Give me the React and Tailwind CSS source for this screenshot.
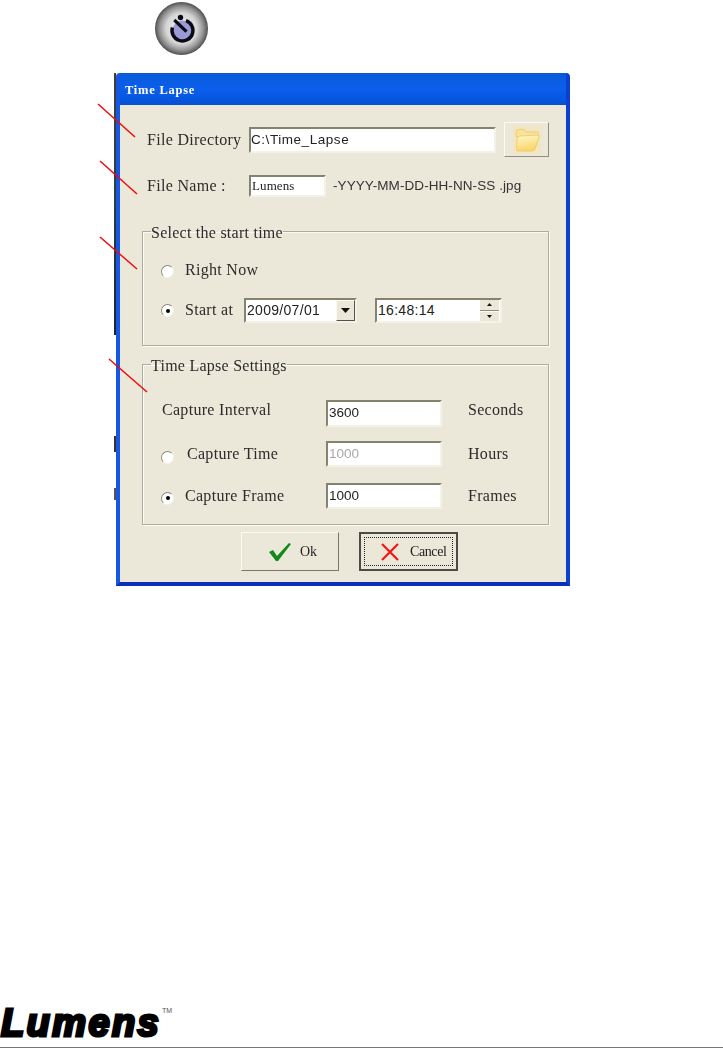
const serif = "font-['Liberation_Serif',serif]";
const sans = "font-['Liberation_Sans',sans-serif]";

function Sunken({ className = "", children }) {
  return (
    <div className={`bg-white border-2 border-t-[#85836f] border-l-[#85836f] border-b-[#f4f2e6] border-r-[#f4f2e6] flex items-center ${className}`}>
      {children}
    </div>
  );
}

function Radio({ checked, className = "" }) {
  return (
    <span className={`w-[13px] h-[13px] rounded-full bg-white border border-t-[#8e8c7e] border-l-[#8e8c7e] border-r-[#f4f2e8] border-b-[#f4f2e8] flex items-center justify-center shrink-0 ${className}`}>
      {checked && <span className="w-[4px] h-[4px] rounded-full bg-black" />}
    </span>
  );
}

function Group({ title, className = "", children }) {
  return (
    <fieldset className={`border border-[#aeac9e] shadow-[1px_1px_0_#fbfaf3,inset_1px_1px_0_#fbfaf3] ${className}`}>
      <legend className={`ml-[8px] px-0 text-[16px] leading-[17px] tracking-[0.25px] translate-y-[1px] text-[#2c2c2c] ${serif}`}>{title}</legend>
      {children}
    </fieldset>
  );
}

function Label({ className = "", children }) {
  return <span className={`text-[16px] leading-[18px] tracking-[0.3px] text-[#2c2c2c] whitespace-nowrap ${serif} ${className}`}>{children}</span>;
}

function TimerBadge() {
  return (
    <svg width="54" height="54" viewBox="0 0 54 54" className="block">
      <defs>
        <radialGradient id="tb" cx="50%" cy="50%" r="50%">
          <stop offset="0%" stopColor="#f2f2f2" />
          <stop offset="58%" stopColor="#d6d6d6" />
          <stop offset="82%" stopColor="#949494" />
          <stop offset="100%" stopColor="#505050" />
        </radialGradient>
      </defs>
      <circle cx="27.5" cy="26.5" r="26.5" fill="url(#tb)" />
      <circle cx="28.5" cy="28.5" r="10" fill="#9a9bd6" />
      <path d="M32 18.6 A10.5 10.5 0 1 1 18.4 25.5" fill="none" stroke="#0a0a14" strokeWidth="3.4" />
      <path d="M20.3 18 L32.5 29.7" stroke="#0a0a14" strokeWidth="3.2" />
      <circle cx="26.5" cy="15.5" r="2.7" fill="#0a0a14" />
    </svg>
  );
}

function FolderIcon() {
  return (
    <svg width="28" height="28" viewBox="0 0 28 28">
      <defs>
        <linearGradient id="fo" x1="0" y1="0" x2="0.3" y2="1">
          <stop offset="0%" stopColor="#fff8cc" />
          <stop offset="100%" stopColor="#f8d66c" />
        </linearGradient>
      </defs>
      <rect x="0" y="0" width="28" height="28" fill="#f2e6c2" />
      <path d="M3 7 Q3 3.5 6 3.5 L11 3.5 L13.5 6 L24 6 Q25.5 6 25.5 8 L25.5 11 L3.5 11 Z" fill="#fbe396" stroke="#e8c56c" strokeWidth="0.8" />
      <path d="M7 10 L26 9 Q26.5 9 26 11 L22 23 Q21.5 25 19.5 25 L5 25 Q3.5 25 3.5 23 L4 14 Q4.5 10 7 10 Z" fill="url(#fo)" stroke="#ecc866" strokeWidth="0.8" />
    </svg>
  );
}

export default function App() {
  return (
    <div className="relative w-[723px] h-[1048px] bg-white overflow-hidden flex flex-col">
      <div className="ml-[154px] mt-[2px] h-[53px]"><TimerBadge /></div>

      <div className="relative ml-[116px] mt-[18px] w-[454px] h-[513px] flex flex-col rounded-t-[4px] overflow-hidden border-l-[4px] border-l-[#1757e6] border-r-[4px] border-r-[#0a3fd0] border-b-[4px] border-b-[#0a30b8] bg-[#ebe8d9] blur-[0.3px]">
        <div className="h-[32px] -mx-[4px] px-[9px] pt-[2px] flex items-center bg-gradient-to-b from-[#0a5ad8] via-[#0a5fec] to-[#0450d6] shrink-0">
          <span className={`text-white font-bold text-[12.5px] tracking-[0.75px] ${serif}`}>Time Lapse</span>
        </div>

        <div className="flex flex-col pl-[22px] w-[429px]">
          <div className="flex items-center h-[35px] mt-[17px]">
            <Label className="pl-[5px] w-[107px]">File Directory</Label>
            <Sunken className="w-[247px] h-[26px]">
              <span className={`text-[13.5px] tracking-[0.55px] translate-y-[1px] text-[#222] ${sans}`}>C:\Time_Lapse</span>
            </Sunken>
            <div className="ml-[8px] w-[45px] h-[35px] flex items-center justify-center bg-[#ebe8d9] border border-t-[#fbfaf3] border-l-[#fbfaf3] border-r-[#8f8d80] border-b-[#8f8d80]">
              <FolderIcon />
            </div>
          </div>

          <div className="flex items-center h-[22px] mt-[18px]">
            <Label className="pl-[5px] w-[107px]">File Name :</Label>
            <Sunken className="w-[77px] h-[22px]">
              <span className={`pl-[1px] text-[13px] tracking-[0.1px] text-[#222] ${serif}`}>Lumens</span>
            </Sunken>
            <span className={`ml-[7px] text-[13.5px] tracking-[0.08px] text-[#333] whitespace-nowrap ${sans}`}>-YYYY-MM-DD-HH-NN-SS .jpg</span>
          </div>

          <Group title="Select the start time" className="mt-[26px] h-[123px]">
            <div className="flex items-center h-[26px] mt-[18px] pl-[18px]">
              <Radio />
              <Label className="ml-[11px] -translate-y-[1px]">Right Now</Label>
            </div>
            <div className="flex items-center h-[25px] mt-[14px] pl-[18px]">
              <Radio checked />
              <Label className="ml-[11px] w-[59px] -translate-y-[1px]">Start at</Label>
              <Sunken className="w-[113px] h-[25px] justify-between">
                <span className={`pl-[1px] text-[14px] tracking-[0.3px] text-[#222] ${sans}`}>2009/07/01</span>
                <span className="w-[19px] h-[21px] flex items-center justify-center bg-[#ebe8d9] border border-t-[#fbfaf3] border-l-[#fbfaf3] border-r-[#55544a] border-b-[#55544a]">
                  <svg width="9" height="5" viewBox="0 0 9 5"><path d="M0 0H9L4.5 5Z" fill="#111" /></svg>
                </span>
              </Sunken>
              <Sunken className="ml-[18px] w-[127px] h-[25px] justify-between">
                <span className={`pl-[1px] text-[14px] tracking-[0.3px] text-[#222] ${sans}`}>16:48:14</span>
                <span className="w-[19px] mr-[1px] h-[21px] flex flex-col">
                  <span className="flex-1 flex items-center justify-center bg-[#ebe8d9] border-b border-b-[#8f8d80]">
                    <svg width="5" height="3" viewBox="0 0 5 3"><path d="M0 3H5L2.5 0Z" fill="#111" /></svg>
                  </span>
                  <span className="flex-1 flex items-center justify-center bg-[#ebe8d9] border-t border-t-[#fbfaf3]">
                    <svg width="5" height="3" viewBox="0 0 5 3"><path d="M0 0H5L2.5 3Z" fill="#111" /></svg>
                  </span>
                </span>
              </Sunken>
            </div>
          </Group>

          <Group title="Time Lapse Settings" className="mt-[10px] h-[169px]">
            <div className="flex items-center h-[27px] mt-[27px] pl-[19px]">
              <Label className="w-[164px] -translate-y-[4px]">Capture Interval</Label>
              <Sunken className="w-[116px] h-[27px]">
                <span className={`pl-[1px] text-[13.5px] text-[#222] ${sans}`}>3600</span>
              </Sunken>
              <Label className="ml-[26px] -translate-y-[4px]">Seconds</Label>
            </div>
            <div className="flex items-center h-[26px] mt-[14px] pl-[18px]">
              <Radio className="translate-y-[3px]" />
              <Label className="ml-[13px] w-[139px]">Capture Time</Label>
              <Sunken className="w-[116px] h-[26px]">
                <span className={`pl-[1px] text-[13.5px] text-[#a9a9a9] ${sans}`}>1000</span>
              </Sunken>
              <Label className="ml-[26px]">Hours</Label>
            </div>
            <div className="flex items-center h-[26px] mt-[16px] pl-[18px]">
              <Radio checked className="translate-y-[2px]" />
              <Label className="ml-[11px] w-[141px]">Capture Frame</Label>
              <Sunken className="w-[116px] h-[26px]">
                <span className={`pl-[1px] text-[13.5px] text-[#222] ${sans}`}>1000</span>
              </Sunken>
              <Label className="ml-[26px]">Frames</Label>
            </div>
          </Group>

          <div className="flex mt-[7px] ml-[99px] gap-[20px]">
            <div className="w-[98px] h-[39px] pl-[26px] flex items-center gap-[8px] bg-[#ebe8d9] border border-t-[#fbfaf3] border-l-[#fbfaf3] border-r-[#77766a] border-b-[#77766a]">
              <svg width="24" height="20" viewBox="0 0 24 20"><path d="M1 10 L5 8 L9 14 L21 1 L23 2 L10 19 L8 19 Z" fill="#118a18" /></svg>
              <span className={`text-[14px] text-[#222] ${serif}`}>Ok</span>
            </div>
            <div className="w-[99px] h-[39px] p-[3px] bg-[#ebe8d9] border-2 border-[#4c4c46]">
              <div className="w-full h-full pl-[16px] flex items-center gap-[11px] border border-dotted border-[#222]">
                <svg width="18" height="18" viewBox="0 0 18 18"><path d="M1 1 L17 17 M17 1 L1 17" stroke="#f21515" strokeWidth="2.2" /></svg>
                <span className={`text-[14px] tracking-[-0.4px] text-[#222] ${serif}`}>Cancel</span>
              </div>
            </div>
          </div>
        </div>
      </div>

      {/* remnants of the desktop wallpaper beside the captured window */}
      <div className="absolute left-[114px] top-[73px] w-[2px] h-[262px] bg-gradient-to-b from-[#3a4038] via-[#26403a] to-[#1c2430]" />
      <div className="absolute left-[114px] top-[436px] w-[2px] h-[16px] bg-[#3a3030]" />
      <div className="absolute left-[114px] top-[488px] w-[2px] h-[12px] bg-[#555]" />

      {/* red call-out lines */}
      <svg className="absolute left-0 top-0 pointer-events-none" width="723" height="600">
        <g stroke="#f00a0a" strokeWidth="1.5">
          <path d="M98 104L135 137" />
          <path d="M100 161L137 194" />
          <path d="M100 237L137 269" />
          <path d="M109 359L147 392" />
        </g>
      </svg>

      {/* logo */}
      <div className="absolute left-[1px] top-[1001px] flex items-start">
        <span className={`text-[38px] leading-[44px] font-bold italic text-black tracking-[2.4px] [-webkit-text-stroke:3px_black] ${sans}`}>Lumens</span>
        <span className={`text-[7px] mt-[5px] ml-[1px] text-[#555] ${sans}`}>TM</span>
      </div>
      <div className="absolute left-0 top-[1047px] w-[723px] h-[1px] bg-[#777]" />
    </div>
  );
}
